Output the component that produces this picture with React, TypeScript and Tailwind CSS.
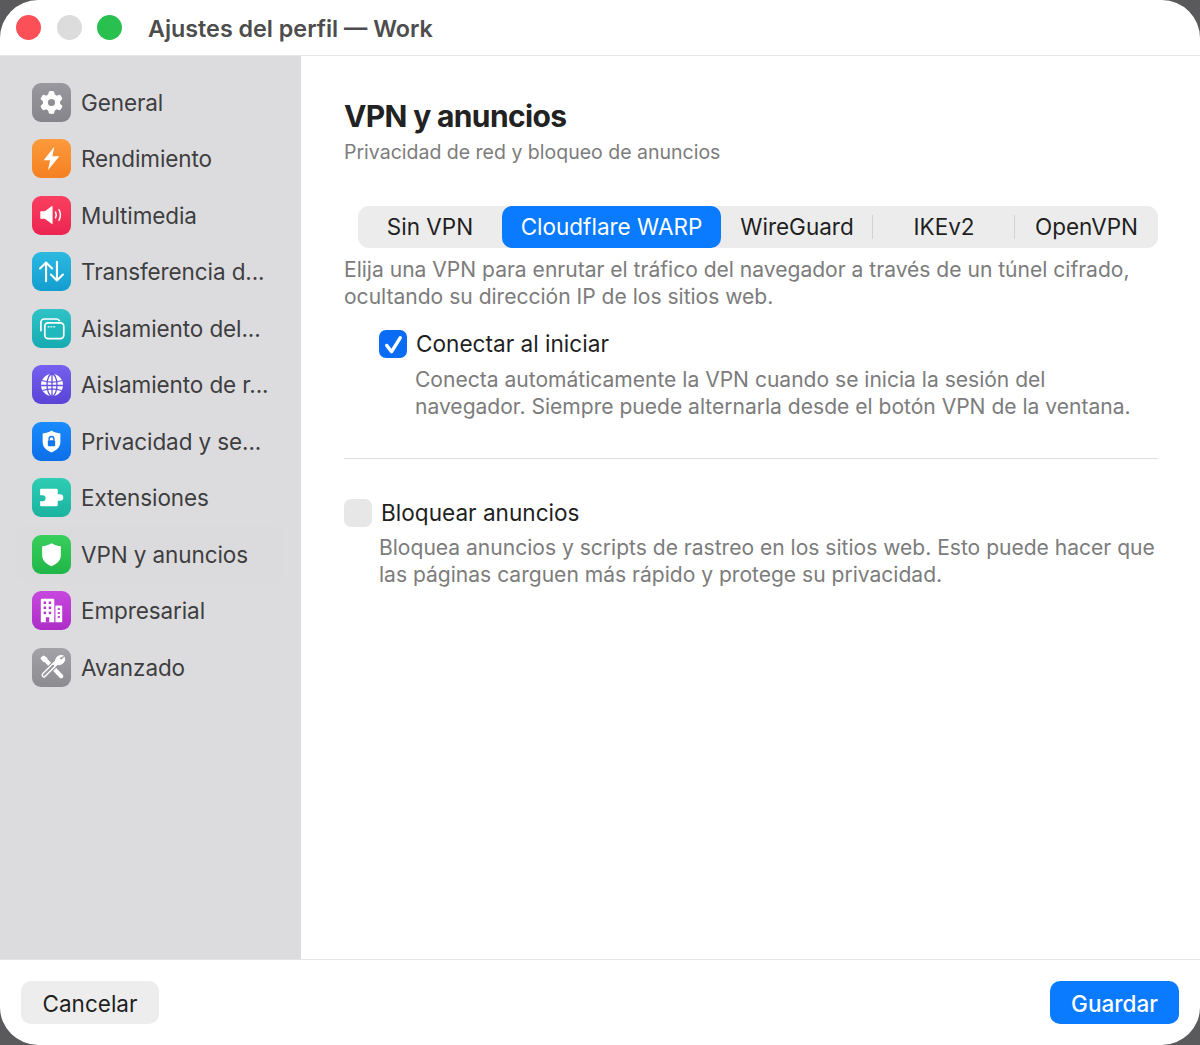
import React from 'react';
import { FaGear } from 'react-icons/fa6';

const Gear = () => <FaGear className="text-white w-[23px] h-[23px]" />;

const Bolt = () => (
  <svg viewBox="0 0 24 24" className="w-[27px] h-[27px]" fill="white">
    <path d="M14.500 1.500 5 13.500h5.800L8.800 22.500 19 10h-6.200z" />
  </svg>
);

const Speaker = () => (
  <svg viewBox="0 0 24 24" className="w-[28px] h-[28px]" fill="none" stroke="white" strokeLinecap="round">
    <path d="M2.500 9.200h3.600L12 4.800v14.400l-5.900-4.400H2.500z" fill="white" stroke="white" strokeWidth="1" strokeLinejoin="round" />
    <path d="M15 9.500c.8 1.500.8 3.500 0 5" strokeWidth="1.300" />
    <path d="M18 7.500c1.500 2.800 1.500 6.200 0 9" strokeWidth="1.300" />
  </svg>
);

const Arrows = () => (
  <svg viewBox="0 0 24 24" className="w-[29px] h-[29px]" fill="none" stroke="white" strokeWidth="1.700" strokeLinecap="round" strokeLinejoin="round">
    <path d="M7.500 20V4.500M2.500 9.500l5-5 5 5" />
    <path d="M16.500 4v15.500M11.500 14.500l5 5 5-5" />
  </svg>
);

const Windows = () => (
  <svg viewBox="0 0 26 26" className="w-[29px] h-[29px]" fill="none" stroke="white" strokeWidth="1.500">
    <path d="M3.500 15.500v-8a3 3 0 0 1 3-3h11a3 3 0 0 1 2.800 2" />
    <rect x="7" y="8" width="17" height="14" rx="3" fill="#1fb8bd" />
    <path d="M10 11.500h.8M12.500 11.500h.8M15 11.500h.8" strokeLinecap="round" strokeWidth="1.200" />
  </svg>
);

const Globe = () => (
  <svg viewBox="0 0 24 24" className="w-[24px] h-[24px]" fill="none">
    <circle cx="12" cy="12" r="11" fill="white" />
    <g stroke="#6650e0" strokeWidth="1.300">
      <ellipse cx="12" cy="12" rx="5" ry="11" />
      <path d="M12 1v22M2 7.500c6 2 14 2 20 0M1 12.500h22M2.500 17.500c6-2 13-2 19 0" />
    </g>
  </svg>
);

const LockShield = () => (
  <svg viewBox="0 0 24 24" className="w-[25px] h-[25px]">
    <path d="M12 1.500c2.600 1.700 5.200 2.500 8.500 2.800v8.200c0 4.700-3.300 8-8.500 10-5.200-2-8.500-5.300-8.500-10V4.300C6.800 4 9.400 3.200 12 1.500z" fill="white" />
    <path d="M9.700 11V9.500a2.300 2.300 0 0 1 4.600 0V11" fill="none" stroke="#1376ee" strokeWidth="1.300" />
    <rect x="8.500" y="10.800" width="7" height="5.700" rx="1" fill="#1376ee" />
  </svg>
);

const Puzzle = () => (
  <svg viewBox="0 0 28 28" className="w-[29px] h-[29px]" fill="white">
    <path fillRule="evenodd" d="M3 6.500a1 1 0 0 1 1-1h15a1 1 0 0 1 1 1v4.300h2.200a3.200 3.200 0 0 1 0 6.400H20v4.300a1 1 0 0 1-1 1H4a1 1 0 0 1-1-1v-4h2.500a2.800 2.800 0 0 0 0-5.600H3z" />
  </svg>
);

const Shield = () => (
  <svg viewBox="0 0 24 24" className="w-[27px] h-[27px]" fill="white">
    <path d="M12 2c2.800 1.700 5.300 2.400 8.300 2.600v7.900c0 4.700-3.200 7.900-8.300 9.900-5.100-2-8.300-5.200-8.300-9.900V4.600C6.700 4.400 9.200 3.700 12 2z" />
  </svg>
);

const Building = () => (
  <svg viewBox="0 0 24 24" className="w-[27px] h-[27px]">
    <path d="M3.500 1.500h10a1 1 0 0 1 1 1v20h-12v-20a1 1 0 0 1 1-1z" fill="white" />
    <path d="M15.500 7.500h5a1 1 0 0 1 1 1v14h-6z" fill="white" />
    <g fill="#b935d0">
      <rect x="5" y="4" width="2.200" height="2.200" />
      <rect x="9.500" y="4" width="2.200" height="2.200" />
      <rect x="5" y="8.500" width="2.200" height="2.200" />
      <rect x="9.500" y="8.500" width="2.200" height="2.200" />
      <rect x="5" y="13" width="2.200" height="2.200" />
      <rect x="9.500" y="13" width="2.200" height="2.200" />
      <rect x="7" y="18" width="3" height="4.500" />
      <rect x="17.500" y="10" width="2" height="1.500" />
      <rect x="17.500" y="13.500" width="2" height="1.500" />
      <rect x="17.500" y="17" width="2" height="1.500" />
    </g>
  </svg>
);

const Tools = () => (
  <svg viewBox="0 0 26 26" className="w-[30px] h-[30px]" fill="none" strokeLinejoin="round" strokeLinecap="round">
    <path d="M6 5.500 21 21" stroke="white" strokeWidth="3.600" />
    <path d="M3.500 5.500 5.500 3.500 8.500 5.500 8 8 5.800 8.200z" fill="white" stroke="white" strokeWidth="1" />
    <path d="M16.500 9.500 6 20" stroke="#97979c" strokeWidth="6.200" />
    <path d="M16.500 9.500 6 20" stroke="white" strokeWidth="4.200" />
    <path d="M14 12 6 20" stroke="#97979c" strokeWidth="1.800" />
    <path d="M22.500 3.200a5 5 0 0 0-6.300 6.300l1.300 1.300a5 5 0 0 0 6.300-6.300l-2.800 2.500-2-1.500z" fill="white" stroke="white" strokeWidth=".8" />
  </svg>
);

const items = [
  { name: 'General', bg: 'bg-gradient-to-b from-[#98989e] to-[#85858b]', icon: <Gear /> },
  { name: 'Rendimiento', bg: 'bg-gradient-to-b from-[#fb9a3c] to-[#f58020]', icon: <Bolt /> },
  { name: 'Multimedia', bg: 'bg-gradient-to-b from-[#fb3f60] to-[#ec2350]', icon: <Speaker /> },
  { name: 'Transferencia d...', bg: 'bg-gradient-to-b from-[#2bb9e0] to-[#129dd0]', icon: <Arrows /> },
  { name: 'Aislamiento del...', bg: 'bg-gradient-to-b from-[#2fc3c6] to-[#15abb2]', icon: <Windows /> },
  { name: 'Aislamiento de r...', bg: 'bg-gradient-to-b from-[#7660ef] to-[#5a43d6]', icon: <Globe /> },
  { name: 'Privacidad y se...', bg: 'bg-gradient-to-b from-[#1a8aff] to-[#0d6fe8]', icon: <LockShield /> },
  { name: 'Extensiones', bg: 'bg-gradient-to-b from-[#2fcdb4] to-[#19b3a0]', icon: <Puzzle /> },
  { name: 'VPN y anuncios', bg: 'bg-gradient-to-b from-[#38cf5c] to-[#20b648]', icon: <Shield />, active: true },
  { name: 'Empresarial', bg: 'bg-gradient-to-b from-[#c748de] to-[#ad2cc6]', icon: <Building /> },
  { name: 'Avanzado', bg: 'bg-gradient-to-b from-[#a2a2a7] to-[#8b8b90]', icon: <Tools /> },
];

const tabs = [
  { label: 'Sin VPN', w: 'w-[144px]' },
  { label: 'Cloudflare WARP', w: 'w-[219px]', active: true },
  { label: 'WireGuard', w: 'w-[152px]', sep: true },
  { label: 'IKEv2', w: 'w-[142px]', sep: true },
  { label: 'OpenVPN', w: 'w-[143px]' },
];

export default function App() {
  return (
    <div className="w-[1200px] h-[1045px] bg-[#5a5a5c] overflow-hidden font-['Inter',sans-serif]">
      <div className="h-full bg-white rounded-[38px] overflow-hidden flex flex-col">
        {/* Title bar */}
        <div className="h-[56px] shrink-0 flex items-center pl-[16px] border-b border-[#e6e6e6]">
          <div className="flex gap-[15.5px]">
            <span className="w-[25px] h-[25px] rounded-full bg-[#fb5058]" />
            <span className="w-[25px] h-[25px] rounded-full bg-[#dcdcdc]" />
            <span className="w-[25px] h-[25px] rounded-full bg-[#29c04f]" />
          </div>
          <span className="ml-[26px] pt-[3px] text-[23.3px] font-semibold text-[#4d4d4d]">Ajustes del perfil — Work</span>
        </div>

        <div className="flex-1 flex min-h-0">
          {/* Sidebar */}
          <aside className="w-[301px] shrink-0 bg-[#dcdcdf] pt-[18px] pl-[16px] pr-[17px]">
            {items.map((it) => (
              <div
                key={it.name}
                className={`h-[56.5px] flex items-center pl-[16px] rounded-[10px] ${it.active ? 'bg-[#dbdbdd]' : ''}`}
              >
                <div className={`w-[39px] h-[39px] rounded-[9px] flex items-center justify-center shrink-0 ${it.bg}`}>
                  {it.icon}
                </div>
                <span className="ml-[10px] pt-[1px] text-[22.5px] tracking-[-0.1px] text-[#3e3e40] whitespace-nowrap">{it.name}</span>
              </div>
            ))}
          </aside>

          {/* Content */}
          <main className="flex-1 pt-[40px] pl-[43px] pr-[42px]">
            <h1 className="text-[30px] leading-[40px] font-bold tracking-[-0.65px] text-[#222]">VPN y anuncios</h1>
            <p className="mt-[2px] text-[19.5px] leading-[28px] text-[#7c7c7c]">Privacidad de red y bloqueo de anuncios</p>

            <div className="mt-[40px] ml-[14px] h-[42px] flex bg-[#ececec] rounded-[11px]">
              {tabs.map((t) => (
                <div
                  key={t.label}
                  className={`${t.w} h-full flex items-center justify-center text-[22.5px] ${t.active ? 'bg-[#0a7aff] text-white rounded-[10px]' : 'text-[#1f1f1f]'} ${t.sep ? 'relative' : ''}`}
                >
                  {t.label}
                  {t.sep && <span className="absolute right-0 top-[9px] h-[24px] w-px bg-[#d2d2d2]" />}
                </div>
              ))}
            </div>

            <p className="mt-[9px] text-[21.05px] leading-[26.5px] text-[#7c7c7c]">
              Elija una VPN para enrutar el tráfico del navegador a través de un túnel cifrado,<br />
              ocultando su dirección IP de los sitios web.
            </p>

            <div className="mt-[19px] ml-[35px] flex items-center h-[30px]">
              <span className="w-[28px] h-[28px] rounded-[7px] bg-[#0a6cf5] flex items-center justify-center">
                <svg viewBox="0 0 24 24" className="w-[23px] h-[23px]" fill="none" stroke="white" strokeWidth="3.600" strokeLinecap="round" strokeLinejoin="round">
                  <path d="M5 13l5 6.500L19 5" />
                </svg>
              </span>
              <span className="ml-[9px] text-[22.6px] text-[#1f1f1f]">Conectar al iniciar</span>
            </div>
            <p className="mt-[8px] ml-[71px] text-[21.05px] leading-[26.5px] text-[#7c7c7c]">
              Conecta automáticamente la VPN cuando se inicia la sesión del<br />
              navegador. Siempre puede alternarla desde el botón VPN de la ventana.
            </p>

            <div className="mt-[38px] h-px bg-[#dedede]" />

            <div className="mt-[39px] flex items-center h-[30px]">
              <span className="w-[28px] h-[28px] rounded-[7px] bg-[#e7e7e7]" />
              <span className="ml-[9px] text-[22.6px] text-[#1f1f1f]">Bloquear anuncios</span>
            </div>
            <p className="mt-[7px] ml-[35px] text-[21.05px] leading-[26.5px] text-[#7c7c7c]">
              Bloquea anuncios y scripts de rastreo en los sitios web. Esto puede hacer que<br />
              las páginas carguen más rápido y protege su privacidad.
            </p>
          </main>
        </div>

        {/* Footer */}
        <div className="h-[86px] shrink-0 border-t border-[#e4e4e4] flex items-center justify-between pl-[21px] pr-[21px]">
          <button className="w-[138px] h-[43px] pt-[2px] rounded-[10px] bg-[#ededed] text-[22.5px] text-[#1f1f1f]">Cancelar</button>
          <button className="w-[129px] h-[43px] pt-[2px] rounded-[10px] bg-[#0a7aff] text-[22.5px] font-medium text-white">Guardar</button>
        </div>
      </div>
    </div>
  );
}
